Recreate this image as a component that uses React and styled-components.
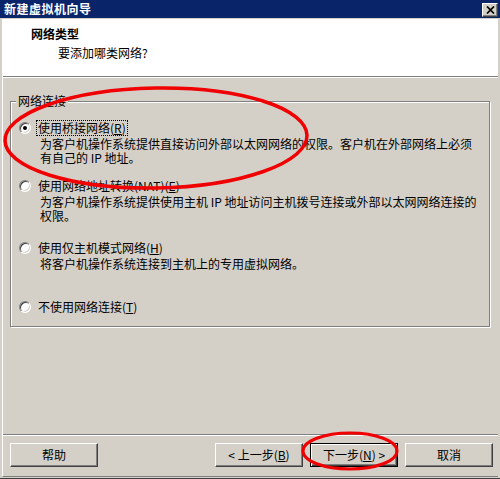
import React from "react";
import styled, { createGlobalStyle, css } from "styled-components";

const GlobalStyle = createGlobalStyle`
  html, body { margin: 0; padding: 0; background: #D4D0C8; }
  body { font-family: "Noto Sans CJK SC", "Liberation Sans", sans-serif; font-size: 12px; color: #000; }
`;

const Window = styled.div`
  position: relative;
  width: 500px;
  height: 479px;
  box-sizing: border-box;
  background: #D4D0C8;
  border-bottom: 1px solid #404040;
  display: flex;
  flex-direction: column;
  overflow: hidden;
`;

const TitleBar = styled.div`
  height: 18px;
  flex: none;
  background: #0A246A;
  display: flex;
  align-items: center;
  justify-content: space-between;
  padding: 0 2px 0 4px;
`;

const TitleText = styled.span`
  color: #fff;
  font-weight: bold;
  font-size: 12px;
  line-height: 14px;
  letter-spacing: 0.5px;
`;

const CloseButton = styled.div`
  width: 16px;
  height: 14px;
  box-sizing: border-box;
  background: #D4D0C8;
  border: 1px solid;
  border-color: #fff #404040 #404040 #fff;
  box-shadow: inset -1px -1px 0 #808080;
  display: flex;
  align-items: center;
  justify-content: center;
  margin-top: 1px;
`;

const Client = styled.div`
  flex: 1;
  margin: 1px 2px 1px 2px;
  border-left: 1px solid #fff;
  border-bottom: 1px solid #808080;
  display: flex;
  flex-direction: column;
  min-height: 0;
`;

const Header = styled.div`
  height: 57px;
  flex: none;
  background: #fff;
  border-bottom: 1px solid #808080;
  box-shadow: 0 1px 0 #fff;
  padding: 7px 0 0 28px;
  box-sizing: content-box;
  box-sizing: border-box;
  height: 58px;
`;

const HeaderTitle = styled.div`
  font-weight: bold;
  font-size: 12px;
  line-height: 16px;
`;

const HeaderSubtitle = styled.div`
  font-size: 12px;
  line-height: 16px;
  margin: 3px 0 0 27px;
`;

const Body = styled.div`
  flex: 1;
  min-height: 0;
  padding: 24px 8px 0 7px;
`;

const GroupBox = styled.div`
  position: relative;
  height: 226px;
  box-sizing: border-box;
  border: 1px solid #808080;
  box-shadow: 1px 1px 0 #fff, inset 1px 1px 0 #fff;
  padding: 18px 0 0 8px;
`;

const GroupLabel = styled.span`
  position: absolute;
  top: -9px;
  left: 5px;
  padding: 0 2px;
  line-height: 16px;
  background: #D4D0C8;
`;

const Option = styled.div`
  margin-top: ${(p) => p.$mt || 0}px;
`;

const OptionRow = styled.div`
  display: flex;
  align-items: center;
  height: 16px;
`;

const Radio = styled.span`
  position: relative;
  width: 12px;
  height: 12px;
  box-sizing: border-box;
  border-radius: 50%;
  background: #fff;
  border: 1px solid;
  border-color: #808080 #fff #fff #808080;
  box-shadow: inset 1px 1px 0 #404040, inset -1px -1px 0 #D4D0C8;
  flex: none;
  ${(p) =>
    p.$checked &&
    css`
      &::after {
        content: "";
        position: absolute;
        left: 3px;
        top: 3px;
        width: 4px;
        height: 4px;
        border-radius: 50%;
        background: #000;
      }
    `}
`;

const OptionLabel = styled.span`
  margin-left: 5px;
  height: 16px;
  box-sizing: border-box;
  line-height: 14px;
  padding: 0 1px;
  border: 1px solid ${(p) => (p.$focused ? "transparent" : "transparent")};
  ${(p) =>
    p.$focused &&
    css`
      border: 1px dotted #000;
    `}
  white-space: nowrap;
`;

const Accel = styled.span`
  text-decoration: underline;
  text-underline-offset: 1px;
`;

const OptionDesc = styled.div`
  margin: 1px 0 0 21px;
  line-height: 14px;
  white-space: nowrap;
`;

const Footer = styled.div`
  flex: none;
  border-top: 1px solid #808080;
  box-shadow: inset 0 1px 0 #fff;
  padding: 8px 5px 9px 7px;
  display: flex;
  align-items: center;
  gap: 7px;
`;

const Spacer = styled.div`
  flex: 1;
`;

const Button = styled.div`
  width: 88px;
  height: 24px;
  box-sizing: border-box;
  background: #D4D0C8;
  display: flex;
  align-items: center;
  justify-content: center;
  white-space: nowrap;
  line-height: 14px;
  ${(p) =>
    p.$default
      ? css`
          border: 1px solid #000;
          box-shadow: inset 1px 1px 0 #fff, inset -1px -1px 0 #404040, inset -2px -2px 0 #808080;
        `
      : css`
          border: 1px solid;
          border-color: #fff #404040 #404040 #fff;
          box-shadow: inset -1px -1px 0 #808080;
        `}
`;

const Annotations = styled.svg`
  position: absolute;
  left: 0;
  top: 0;
  width: 500px;
  height: 479px;
  pointer-events: none;
`;

export default function App() {
  return (
    <>
      <GlobalStyle />
      <Window>
        <TitleBar>
          <TitleText>新建虚拟机向导</TitleText>
          <CloseButton>
            <svg width="9" height="8" viewBox="0 0 9 8">
              <path d="M1 0.5 L8 7.5 M8 0.5 L1 7.5" stroke="#000" strokeWidth="1.7" />
            </svg>
          </CloseButton>
        </TitleBar>
        <Client>
          <Header>
            <HeaderTitle>网络类型</HeaderTitle>
            <HeaderSubtitle>要添加哪类网络?</HeaderSubtitle>
          </Header>
          <Body>
            <GroupBox>
              <GroupLabel>网络连接</GroupLabel>
              <Option>
                <OptionRow>
                  <Radio $checked />
                  <OptionLabel $focused>
                    使用桥接网络(<Accel>R</Accel>)
                  </OptionLabel>
                </OptionRow>
                <OptionDesc>
                  为客户机操作系统提供直接访问外部以太网网络的权限。客户机在外部网络上必须
                  <br />
                  有自己的 IP 地址。
                </OptionDesc>
              </Option>
              <Option $mt={13}>
                <OptionRow>
                  <Radio />
                  <OptionLabel>
                    使用网络地址转换(NAT)(<Accel>E</Accel>)
                  </OptionLabel>
                </OptionRow>
                <OptionDesc>
                  为客户机操作系统提供使用主机 IP 地址访问主机拨号连接或外部以太网网络连接的
                  <br />
                  权限。
                </OptionDesc>
              </Option>
              <Option $mt={17}>
                <OptionRow>
                  <Radio />
                  <OptionLabel>
                    使用仅主机模式网络(<Accel>H</Accel>)
                  </OptionLabel>
                </OptionRow>
                <OptionDesc>将客户机操作系统连接到主机上的专用虚拟网络。</OptionDesc>
              </Option>
              <Option $mt={28}>
                <OptionRow>
                  <Radio />
                  <OptionLabel>
                    不使用网络连接(<Accel>T</Accel>)
                  </OptionLabel>
                </OptionRow>
              </Option>
            </GroupBox>
          </Body>
          <Footer>
            <Button>帮助</Button>
            <Spacer />
            <Button>
              &lt; 上一步(<Accel>B</Accel>)
            </Button>
            <Button $default>
              下一步(<Accel>N</Accel>) &gt;
            </Button>
            <Button>取消</Button>
          </Footer>
        </Client>
        <Annotations viewBox="0 0 500 479">
          <ellipse cx="156" cy="138" rx="151" ry="50" fill="none" stroke="#F00000" strokeWidth="3.5" transform="rotate(-1 156 138)" />
          <ellipse cx="350" cy="451" rx="47" ry="18" fill="none" stroke="#F00000" strokeWidth="3" />
        </Annotations>
      </Window>
    </>
  );
}
